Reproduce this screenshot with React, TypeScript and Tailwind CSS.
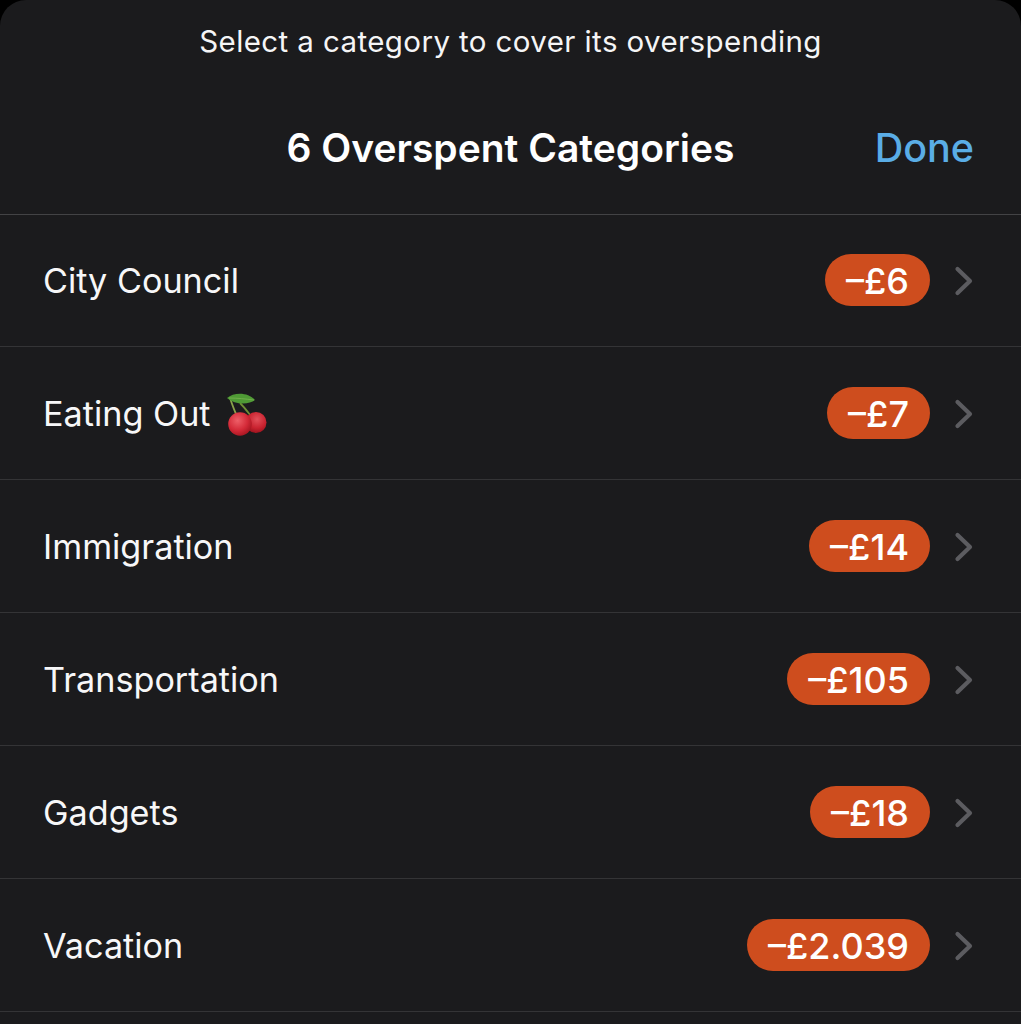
const rows = [
  { name: 'City Council', amount: '–£6' },
  { name: 'Eating Out', amount: '–£7', cherry: true },
  { name: 'Immigration', amount: '–£14' },
  { name: 'Transportation', amount: '–£105' },
  { name: 'Gadgets', amount: '–£18' },
  { name: 'Vacation', amount: '–£2.039' },
]

function Cherries() {
  return (
    <svg width="44" height="46" viewBox="0 0 44 46" className="ml-[15px] shrink-0">
      <defs>
        <radialGradient id="cherryLeft" cx="0.4" cy="0.35" r="0.7">
          <stop offset="0" stopColor="#ee5f68" />
          <stop offset="0.6" stopColor="#d42a38" />
          <stop offset="1" stopColor="#a3141f" />
        </radialGradient>
        <radialGradient id="cherryRight" cx="0.55" cy="0.35" r="0.7">
          <stop offset="0" stopColor="#e2505a" />
          <stop offset="0.6" stopColor="#c9222f" />
          <stop offset="1" stopColor="#93111b" />
        </radialGradient>
      </defs>
      <path d="M4 8 C6 14 8 20 11 26" stroke="#8aa24a" strokeWidth="1.8" fill="none" />
      <path d="M14 13 C18 17 21 21 25 26" stroke="#6f8f35" strokeWidth="1.8" fill="none" />
      <circle cx="30" cy="32.5" r="10.5" fill="url(#cherryRight)" />
      <circle cx="14" cy="34" r="11.8" fill="url(#cherryLeft)" />
      <path d="M1 8 C8 2 22 2 29 10 C23 15 9 15 1 8 Z" fill="#4f9a35" />
      <path d="M3 8 C11 8 20 9 28 10" stroke="#79b550" strokeWidth="0.8" fill="none" />
    </svg>
  )
}

function Chevron() {
  return (
    <svg width="20" height="30" viewBox="0 0 20 30" className="mt-[2px] ml-[24px] shrink-0">
      <path
        d="M3.5 3 L16 15 L3.5 27"
        fill="none"
        stroke="#5c5c60"
        strokeWidth="4.2"
        strokeLinecap="round"
        strokeLinejoin="round"
      />
    </svg>
  )
}

export default function App() {
  return (
    <div className="h-[1024px] w-[1021px] overflow-hidden bg-black font-['Inter',sans-serif] text-white">
      <div className="h-full rounded-t-[26px] bg-[#1b1b1d]">
        <header className="h-[215px] border-b border-[#434345]">
          <p className="pt-[22px] text-center text-[29.5px] leading-[38px] tracking-[0.4px] text-[#f5f5f6]">
            Select a category to cover its overspending
          </p>
          <div className="relative mt-[58px] text-center">
            <h1 className="text-[39px] leading-[60px] font-semibold">6 Overspent Categories</h1>
            <span className="absolute top-0 right-[47px] text-[39.5px] leading-[60px] font-medium text-[#5aade6]">
              Done
            </span>
          </div>
        </header>
        <ul className="-mt-px">
          {rows.map((row) => (
            <li
              key={row.name}
              className="flex h-[133px] items-center border-b border-[#343436] pr-[47px] pl-[43px]"
            >
              <span className="pt-[2px] text-[34.2px] leading-[44px] text-[#f7f7f8]">{row.name}</span>
              {row.cherry && <Cherries />}
              <span className="ml-auto flex h-[52px] items-center rounded-full bg-[#ce4d1e] px-[21px] pt-[1px] text-[36px] font-[550]">
                {row.amount}
              </span>
              <Chevron />
            </li>
          ))}
        </ul>
      </div>
    </div>
  )
}
